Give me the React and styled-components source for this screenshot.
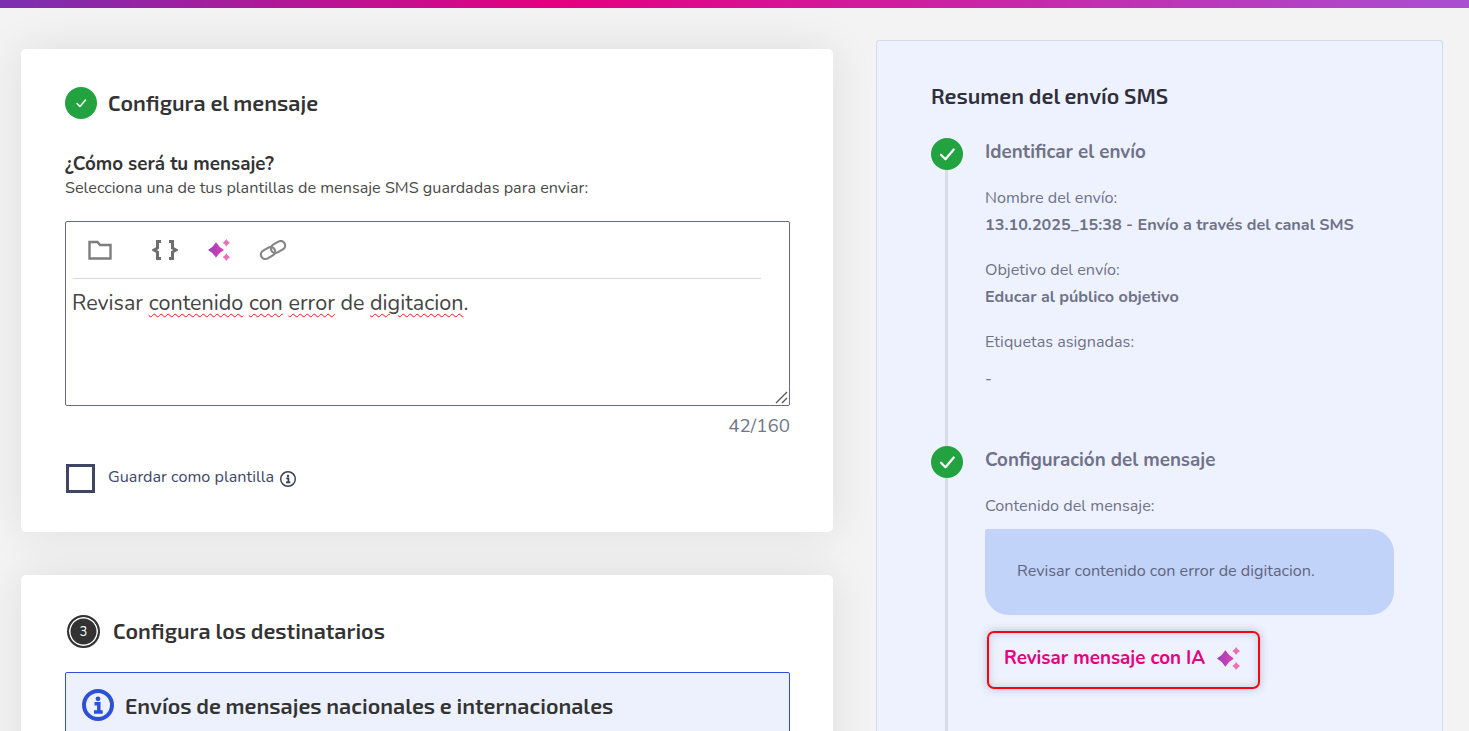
import React from 'react';
import styled, {createGlobalStyle} from 'styled-components';

const bodyFont = '"Nunito", "Noto Sans", "Open Sans", sans-serif';
const headFont = '"Exo 2", "Noto Sans", "Open Sans", sans-serif';

const GlobalStyle = createGlobalStyle`
  html, body {
    margin: 0;
    padding: 0;
    height: 100%;
    overflow: hidden;
    background: #f3f3f3;
  }
  * {
    box-sizing: border-box;
  }
`;

const Page = styled.div`
  height: 731px;
  overflow: hidden;
  font-family: ${bodyFont};
`;

const TopBar = styled.div`
  height: 8px;
  background: linear-gradient(90deg, #7a30b0 0%, #e5007f 38%, #a94fd2 100%);
`;

const Columns = styled.div`
  display: flex;
  align-items: flex-start;
  gap: 43px;
  padding: 32px 26px 0 21px;
`;

const LeftColumn = styled.div`
  width: 812px;
  padding-top: 9px;
  display: flex;
  flex-direction: column;
  gap: 43px;
`;

const Card = styled.section`
  background: #fff;
  border-radius: 5px;
  padding: ${props => props.$pad};
  min-height: ${props => props.$minHeight || 'auto'};
  box-shadow: 0 0 45px rgba(0, 0, 0, 0.09);
`;

const SectionHead = styled.div`
  display: flex;
  align-items: center;
  gap: ${props => props.$gap};
  padding-left: ${props => props.$indent || '0'};
`;

const SectionTitle = styled.h2`
  margin: 0;
  padding-bottom: 2px;
  font-family: ${headFont};
  font-size: 21.6px;
  line-height: 30px;
  font-weight: 600;
  color: #333;
`;

const CheckCircle = styled.span`
  width: 32px;
  height: 32px;
  flex: none;
  border-radius: 50%;
  background: #23a340;
  display: flex;
  align-items: center;
  justify-content: center;
`;

const NumberCircle = styled.span`
  width: 33px;
  height: 33px;
  flex: none;
  margin-top: 2px;
  border-radius: 50%;
  background: #333;
  border: 2px solid #333;
  box-shadow: inset 0 0 0 1.5px #fff;
  color: #fff;
  font-size: 13px;
  font-family: ${bodyFont};
  display: flex;
  align-items: center;
  justify-content: center;
`;

const QuestionTitle = styled.div`
  margin-top: 33px;
  font-size: 18.8px;
  line-height: 24px;
  font-weight: 700;
  color: #333;
`;

const QuestionHint = styled.div`
  font-size: 16.2px;
  line-height: 24px;
  color: #4a4a4a;
`;

const Editor = styled.div`
  position: relative;
  margin-top: 21px;
  height: 185px;
  border: 1px solid #666d82;
  border-radius: 2px;
  padding: 0 28px 0 7px;
`;

const Toolbar = styled.div`
  height: 57px;
  display: flex;
  align-items: center;
  padding: 0 0 0 15px;
  border-bottom: 1px solid #d9d9d9;
`;

const ToolButton = styled.span`
  display: flex;
  margin-right: ${props => props.$space};
`;

const EditorText = styled.div`
  margin: 10px 0 0 -1px;
  font-size: 21.55px;
  line-height: 28px;
  color: #444;
`;

const Typo = styled.span`
  text-decoration: underline wavy #e8141c 1.2px;
  text-underline-offset: 3px;
`;

const ResizeGrip = styled.svg`
  position: absolute;
  right: 1px;
  bottom: 1px;
`;

const Counter = styled.div`
  margin-top: 8px;
  text-align: right;
  font-size: 18.8px;
  line-height: 24px;
  color: #6f7587;
`;

const CheckRow = styled.label`
  margin-top: 26px;
  padding-left: 1px;
  display: flex;
  align-items: center;
`;

const CheckBox = styled.span`
  width: 29px;
  height: 29px;
  border: 3px solid #3e4565;
  margin-right: 13px;
`;

const CheckLabel = styled.span`
  font-size: 16.2px;
  line-height: 24px;
  padding-bottom: 3px;
  color: #3e4565;
  margin-right: 6px;
`;

const Notice = styled.div`
  margin-top: 24px;
  height: 90px;
  background: #ecf1fd;
  border: 1px solid #2c50d8;
  border-radius: 2px;
  padding: 16px 16px;
  display: flex;
  align-items: flex-start;
  gap: 11px;
`;

const NoticeTitle = styled.div`
  font-family: ${headFont};
  font-size: 21.6px;
  line-height: 32px;
  font-weight: 600;
  color: #333;
`;

const Aside = styled.aside`
  width: 567px;
  height: 760px;
  background: #eef2fe;
  border: 1px solid #d6daea;
  border-radius: 3px;
  padding: 39px 48px 0 54px;
`;

const AsideTitle = styled.h2`
  margin: 0 0 26px;
  padding-bottom: 2px;
  font-family: ${headFont};
  font-size: 21.6px;
  line-height: 30px;
  font-weight: 600;
  color: #2f2f3b;
`;

const Step = styled.div`
  display: flex;
  gap: 22px;
  height: ${props => props.$height};
`;

const Rail = styled.div`
  width: 32px;
  flex: none;
  display: flex;
  flex-direction: column;
  align-items: center;
`;

const RailLine = styled.div`
  width: 3px;
  flex: 1;
  margin-right: 1px;
  background: #d9dce7;
`;

const StepBody = styled.div`
  flex: 1;
  min-width: 0;
  padding-top: 2px;
`;

const StepTitle = styled.div`
  font-size: 18.8px;
  line-height: 25px;
  font-weight: 700;
  color: #6f7289;
  margin-bottom: ${props => props.$after};
`;

const FieldLabel = styled.div`
  font-size: 16.2px;
  line-height: 27px;
  color: #6f7289;
`;

const FieldValue = styled.div`
  font-size: 16.2px;
  line-height: 27px;
  font-weight: 700;
  color: #6f7289;
  margin-bottom: 18px;
`;

const Dash = styled.div`
  margin-top: 10px;
  font-size: 16.2px;
  line-height: 27px;
  color: #6f7289;
`;

const Bubble = styled.div`
  margin-top: 9px;
  height: 86px;
  padding: 0 32px 2px;
  background: #c1d3f8;
  border-radius: 2px 24px 24px 24px;
  display: flex;
  align-items: center;
  font-size: 16.2px;
  color: #5f6580;
`;

const ReviewButton = styled.button`
  margin: 16px 0 0 2px;
  width: 273px;
  height: 58px;
  padding: 0 0 4px 15px;
  background: transparent;
  border: 2px solid #f5050f;
  border-radius: 7px;
  box-shadow: 0 0 8px rgba(60, 70, 110, 0.3), inset 0 0 9px rgba(60, 70, 110, 0.22);
  display: flex;
  align-items: center;
  gap: 12px;
  font-family: ${bodyFont};
  font-size: 18.8px;
  font-weight: 700;
  color: #e5007f;
`;

const Sparkles = ({size, id}) => (
  <svg width={size} height={size} viewBox="0 0 24 24">
    <defs>
      <linearGradient id={id} x1="0" y1="0" x2="1" y2="0">
        <stop offset="0" stopColor="#9a3fc4" />
        <stop offset="1" stopColor="#e040a8" />
      </linearGradient>
    </defs>
    <path
      d="M8.75 3.5 Q11.9 8.8 17.5 12 Q11.9 15.2 8.75 20.5 Q5.6 15.2 0 12 Q5.6 8.8 8.75 3.5Z"
      fill={`url(#${id})`}
    />
    <path d="M20 0 Q21.5 2.9 24 4.2 Q21.5 5.5 20 8.4 Q18.5 5.5 16 4.2 Q18.5 2.9 20 0Z" fill="#ee6fb4" />
    <path d="M20 15.6 Q21.5 18.5 24 19.8 Q21.5 21.1 20 24 Q18.5 21.1 16 19.8 Q18.5 18.5 20 15.6Z" fill="#ee6fb4" />
  </svg>
);

const Tick = ({size, width}) => (
  <svg width={size} height={size} viewBox="0 0 24 24" fill="none">
    <path d="M4 13 L10 19 L21 6" stroke="#fff" strokeWidth={width} strokeLinecap="round" strokeLinejoin="round" />
  </svg>
);

const InfoIcon = ({size, color, width}) => (
  <svg width={size} height={size} viewBox="0 0 24 24" fill="none">
    <circle cx="12" cy="12" r={12 - width / 2} stroke={color} strokeWidth={width} />
    <circle cx="12" cy="7.4" r="1.8" fill={color} />
    <path d="M9.4 11 H12.6 V17 M9 17.2 H15.5" stroke={color} strokeWidth="2.6" />
  </svg>
);

const App = () => (
  <Page>
    <GlobalStyle />
    <TopBar />
    <Columns>
      <LeftColumn>
        <Card $pad="38px 43px 39px 44px">
          <SectionHead $gap="11px">
            <CheckCircle>
              <Tick size={12} width={3} />
            </CheckCircle>
            <SectionTitle>Configura el mensaje</SectionTitle>
          </SectionHead>
          <QuestionTitle>¿Cómo será tu mensaje?</QuestionTitle>
          <QuestionHint>Selecciona una de tus plantillas de mensaje SMS guardadas para enviar:</QuestionHint>
          <Editor>
            <Toolbar>
              <ToolButton $space="40px">
                <svg width="24" height="20" viewBox="0 0 24 20" fill="none">
                  <path d="M1.5 2 H9.5 L12 5 H22.5 V18.5 H1.5 Z" stroke="#7d7d7d" strokeWidth="2.4" />
                </svg>
              </ToolButton>
              <ToolButton $space="30px">
                <svg width="26" height="20" viewBox="0 0 26 20" fill="none" stroke="#6e6e6e" strokeWidth="3">
                  <path d="M9 1.5 H5.5 V8 L2 10 L5.5 12 V18.5 H9" />
                  <path d="M17 1.5 H20.5 V8 L24 10 L20.5 12 V18.5 H17" />
                </svg>
              </ToolButton>
              <ToolButton $space="29px">
                <Sparkles size={22} id="spark-tool" />
              </ToolButton>
              <ToolButton $space="0">
                <svg width="28" height="24" viewBox="0 0 28 24" fill="none" stroke="#858585" strokeWidth="2.2">
                  <rect x="1.5" y="10.5" width="15" height="9" rx="4.5" transform="rotate(-30 9 15)" />
                  <rect x="11.5" y="4.5" width="15" height="9" rx="4.5" transform="rotate(-30 19 9)" />
                </svg>
              </ToolButton>
            </Toolbar>
            <EditorText>
              Revisar <Typo>contenido</Typo> <Typo>con</Typo> <Typo>error</Typo> de <Typo>digitacion</Typo>.
            </EditorText>
            <ResizeGrip width="14" height="14" viewBox="0 0 14 14" stroke="#555" strokeWidth="1.3">
              <path d="M2 13 L13 2 M8 13 L13 8" />
            </ResizeGrip>
          </Editor>
          <Counter>42/160</Counter>
          <CheckRow>
            <CheckBox />
            <CheckLabel>Guardar como plantilla</CheckLabel>
            <InfoIcon size={16} color="#3a3f55" width={2.2} />
          </CheckRow>
        </Card>
        <Card $pad="38px 43px 0 44px" $minHeight="260px">
          <SectionHead $gap="13px" $indent="2px">
            <NumberCircle>3</NumberCircle>
            <SectionTitle>Configura los destinatarios</SectionTitle>
          </SectionHead>
          <Notice>
            <InfoIcon size={32} color="#2c50d8" width={3} />
            <NoticeTitle>Envíos de mensajes nacionales e internacionales</NoticeTitle>
          </Notice>
        </Card>
      </LeftColumn>
      <Aside>
        <AsideTitle>Resumen del envío SMS</AsideTitle>
        <Step $height="308px">
          <Rail>
            <CheckCircle>
              <Tick size={18} width={3} />
            </CheckCircle>
            <RailLine />
          </Rail>
          <StepBody>
            <StepTitle $after="20px">Identificar el envío</StepTitle>
            <FieldLabel>Nombre del envío:</FieldLabel>
            <FieldValue>13.10.2025_15:38 - Envío a través del canal SMS</FieldValue>
            <FieldLabel>Objetivo del envío:</FieldLabel>
            <FieldValue>Educar al público objetivo</FieldValue>
            <FieldLabel>Etiquetas asignadas:</FieldLabel>
            <Dash>-</Dash>
          </StepBody>
        </Step>
        <Step $height="400px">
          <Rail>
            <CheckCircle>
              <Tick size={18} width={3} />
            </CheckCircle>
            <RailLine />
          </Rail>
          <StepBody>
            <StepTitle $after="20px">Configuración del mensaje</StepTitle>
            <FieldLabel>Contenido del mensaje:</FieldLabel>
            <Bubble>Revisar contenido con error de digitacion.</Bubble>
            <ReviewButton>
              Revisar mensaje con IA
              <Sparkles size={23} id="spark-button" />
            </ReviewButton>
          </StepBody>
        </Step>
      </Aside>
    </Columns>
  </Page>
);

export default App;
